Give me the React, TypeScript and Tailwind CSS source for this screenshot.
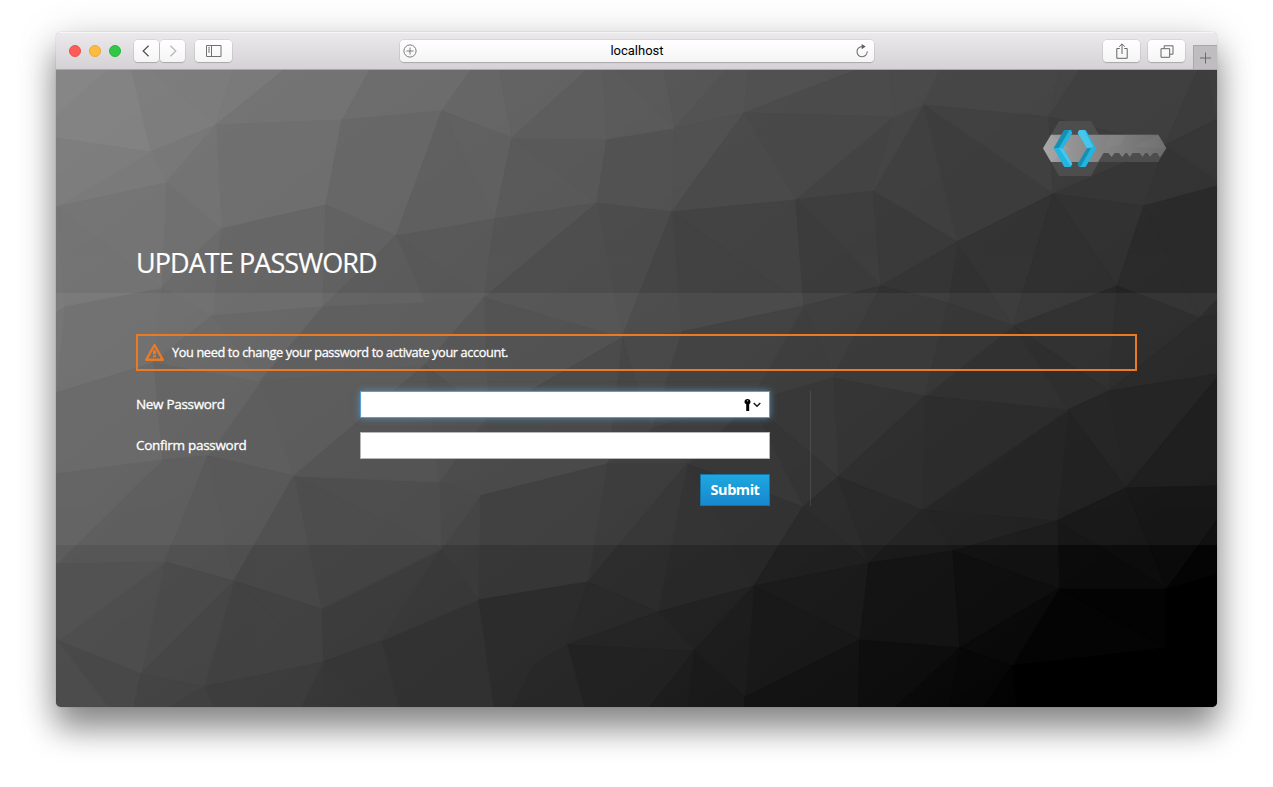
import React from "react";

type Point = [number, number];

/* Corners of the faceted backdrop. */
const points: Point[] = [
  [95, 82], [160, 55], [110, 113], [165, 159], [286, 50], [270, 135], [386, 41], [340, 166], [105, 218], [156, 246],
  [267, 237], [369, 233], [8, 236], [204, 312], [97, 293], [439, 149], [541, 133], [428, 228], [456, 68], [551, 69],
  [619, 58], [688, 43], [616, 142], [740, 130], [748, 236], [566, 268], [625, 262], [867, 35], [838, 47], [993, 47],
  [817, 121], [901, 172], [997, 124], [1088, 136], [825, 216], [957, 256], [1061, 216], [1144, 248], [892, 233], [1109, 75],
  [777, 308], [1053, 321], [1012, 340], [869, 326], [694, 332], [595, 359], [551, 394], [631, 394], [424, 426], [747, 437],
  [782, 407], [422, 530], [532, 512], [602, 542], [698, 516], [511, 575], [478, 595], [638, 581], [689, 627], [385, 479],
  [432, 345], [369, 295], [106, 390], [152, 386], [238, 406], [383, 412], [109, 492], [178, 511], [265, 539], [325, 571],
  [267, 592], [2, 571], [85, 604], [148, 617], [866, 440], [1001, 451], [1070, 418], [813, 493], [897, 481], [1003, 519],
  [1111, 519], [804, 570], [904, 578], [956, 596], [1111, 578],
  [0, 0], [50, 0], [76, 0], [95, 0], [178, 0], [228, 0], [314, 0], [415, 0], [443, 0], [531, 0],
  [547, 0], [560, 0], [608, 0], [670, 0], [693, 0], [801, 0], [834, 0], [841, 0], [884, 0], [955, 0],
  [1004, 0], [1024, 0], [1142, 0], [1150, 0], [1161, 0],
  [1161, 49], [1161, 110], [1161, 116], [1161, 230], [1161, 245], [1161, 304], [1161, 308], [1161, 416], [1161, 450],
  [1161, 505], [1161, 532], [1161, 612], [1161, 637],
  [1102, 637], [960, 637], [928, 637], [893, 637], [840, 637], [803, 637], [688, 637], [631, 637], [594, 637],
  [528, 637], [457, 637], [437, 637], [343, 637], [310, 637], [271, 637], [245, 637], [158, 637], [115, 637],
  [78, 637], [52, 637], [0, 637],
  [0, 567], [0, 494], [0, 404], [0, 323], [0, 242], [0, 172], [0, 137], [0, 68], [0, 45],
];

/* Edges between the corners, as chains of indices. */
const chains = `
86-152 87-0 88-1-89 90-1 91-4 1-4-6-92 151-0-1 0-2 0-150 150-2-1 2-3-1 2-8-3-5 3-9 4-5-7 5-10 6-7 14-8-9 148-12-8-150
12-150 9-14 9-13 9-10-7 13-10-11 10-61 7-11-17 11-13 17-61 14-13 147-14-62 12-147 13-63 13-64 13-61-64 61-65-60-61
17-60-25 46-25-45-26-24 25-26 44-47 45-44 45-47-46 45-46 48-46-52-47-53 54-47-49-54 49-50 49-44-50 59-48-65 51-48-60
59-51-52-55 52-53-55 57-53-54-57 54-58 57-55-56-133 55-132 51-134 131-57-130 57-58-129 58-81 54-77-49 77-50-74
50-43-74 43-42-74 75-42-76 41-42-35-41-36 37-41-115 41-76-116 117-76-75 76-80-75-74 78-75-79 77-74-78-77-81 79-78-82
79-80-84-79-83 79-82-81-128 118-80-119 81-54 127-82-126 82-83-125 124-83-84-120 121-84-123 43-40-34 24-40-44 40-50
43-35 24-34 68-59-69 59-64-65-59 67-64-63-62 64-68 66-63-67 146-62-145 62-66-71 72-66-67-68-70-67-72 67-73
51-69-70-73 69-135 137-70-138 70-136 139-73-140 73-72-141 72-71-142 71-144 93-18-94 19-95 96-20-97 20-98 99-21-100
6-18-19-20-21 6-15-18-16-15-7 15-17 19-16-22-20 22-21-23-22 17-16-25-22-26 22-24-23 25-17-7 21-28-101 102-27-103
28-27-30-28-23-30-34-23 30-31-27-32-29-27 104-29-105 106-29-39-107 39-110-108 32-39-33 39-111 31-32-33-36-32-35
36-37-33-112 38-31-34-38-35-31 38-43 35-36 113-37-114 66-145 24-44
`;

function buildFacets(): number[][] {
  const links: Set<number>[] = points.map(() => new Set<number>());
  const join = (a: number, b: number) => {
    links[a].add(b);
    links[b].add(a);
  };
  chains.trim().split(/\s+/).forEach((chain) => {
    const ids = chain.split("-").map(Number);
    for (let i = 1; i < ids.length; i++) join(ids[i - 1], ids[i]);
  });
  for (let i = 85; i < 152; i++) join(i, i + 1);
  join(152, 85);

  const angle = (a: number, b: number) => Math.atan2(points[b][1] - points[a][1], points[b][0] - points[a][0]);
  const around = links.map((set, a) => [...set].sort((p, q) => angle(a, p) - angle(a, q)));
  const seen = new Set<string>();
  const faces: number[][] = [];
  around.forEach((list, a) =>
    list.forEach((b) => {
      if (seen.has(a + ":" + b)) return;
      const face: number[] = [];
      let from = a;
      let to = b;
      while (!seen.has(from + ":" + to)) {
        seen.add(from + ":" + to);
        face.push(from);
        const next = around[to];
        const turn = next[(next.indexOf(from) + next.length - 1) % next.length];
        from = to;
        to = turn;
      }
      faces.push(face);
    })
  );
  return faces.filter((f) => {
    const area = f.reduce((sum, p, i) => {
      const q = f[(i + 1) % f.length];
      return sum + points[p][0] * points[q][1] - points[q][0] * points[p][1];
    }, 0);
    return area > 0;
  });
}

const facets = buildFacets();

function shade(face: number[]) {
  const x = face.reduce((s, i) => s + points[i][0], 0) / face.length;
  const y = face.reduce((s, i) => s + points[i][1], 0) / face.length;
  const lift = Math.max(0, x - 760) * 0.045 * (1 - y / 637);
  const v = Math.max(0, Math.round(138 - 0.077 * x - 0.099 * y + lift));
  return `rgb(${v},${v},${v})`;
}

function Backdrop() {
  return (
    <svg className="absolute inset-0 h-full w-full" viewBox="0 0 1161 637" preserveAspectRatio="none" aria-hidden="true">
      <defs>
        <linearGradient id="slope" gradientUnits="userSpaceOnUse" x1="0" y1="0" x2="675.6" y2="868.6">
          <stop offset="0" stopColor="#8a8a8a" />
          <stop offset="1" stopColor="#000" />
        </linearGradient>
      </defs>
      <rect width="1161" height="637" fill="url(#slope)" />
      <g opacity="0.9">
        {facets.map((face, i) => (
          <polygon
            key={i}
            points={face.map((p) => points[p].join(",")).join(" ")}
            fill={shade(face)}
            stroke={shade(face)}
            strokeWidth="1.2"
            strokeLinejoin="round"
          />
        ))}
      </g>
    </svg>
  );
}

function KeyLogo() {
  return (
    <svg width="125" height="57" viewBox="36 30 375 171" aria-hidden="true">
      <defs>
        <linearGradient id="blade" x1="0" x2="1">
          <stop offset="0" stopColor="#a2a2a2" />
          <stop offset="0.45" stopColor="#868686" />
          <stop offset="1" stopColor="#6c6c6c" />
        </linearGradient>
      </defs>
      <path d="M87 33H183L207 74H385L409 115L385 156H207L183 198H87L39 115Z" fill="#4d4d4d" />
      <path d="M63 74H385L409 115L391 140H388L382 129H370L360 140L352 129H346L338 140L329 129H308L299 141L291 129H286L277 141L267 129H254L245 141L235 129H221L204 156H63L39 115Z" fill="url(#blade)" />
      <path d="M39 115L63 74L120 115L63 156Z" fill="#fff" opacity=".06" />
      <path d="M240 74H290L270 105L225 115Z M310 110L385 74L409 115Z" fill="#fff" opacity=".03" />
      <path d="M103 60H123L127 69L99 115L127 162L122 171H103L71 115Z" fill="#22b5e0" />
      <path d="M103 60L118 61L87 113L71 115Z" fill="#168fb3" />
      <path d="M87 115H99L127 162L122 168Z" fill="#45c6ea" />
      <path d="M148 60H167L198 115L167 171H148L143 162L171 115L143 69Z" fill="#22b5e0" />
      <path d="M148 60H163L190 110L171 115L143 69Z" fill="#45c6ea" />
      <path d="M171 115H183L153 168L148 171L143 162Z" fill="#168fb3" />
    </svg>
  );
}

const toolButton =
  "flex h-[22px] items-center justify-center rounded-[4px] bg-gradient-to-b from-white to-[#f5f5f5] shadow-[0_0_0_0.5px_rgba(0,0,0,0.13),0_1px_1px_rgba(0,0,0,0.16)]";

function Toolbar() {
  return (
    <div className="flex h-[38px] shrink-0 items-center border-b border-[#a9a8a9] border-t border-t-[#f6f6f6] bg-gradient-to-b from-[#ebe9eb] to-[#d4d2d4] pl-[13px]">
      <div className="flex gap-2">
        <span className="h-3 w-3 rounded-full border border-[#ec514c] bg-[#fc5d59]" />
        <span className="h-3 w-3 rounded-full border border-[#e9a937] bg-[#fdbb40]" />
        <span className="h-3 w-3 rounded-full border border-[#28b63b] bg-[#33c748]" />
      </div>
      <div className="ml-[13px] flex gap-px">
        <span className={toolButton + " w-[25px] pr-[2px]"}>
          <svg width="8" height="12" viewBox="0 0 8 12" fill="none" stroke="#555" strokeWidth="1.3"><path d="M6.6 .7L1.2 6l5.4 5.3" /></svg>
        </span>
        <span className={toolButton + " w-[25px]"}>
          <svg width="8" height="12" viewBox="0 0 8 12" fill="none" stroke="#b9b9b9" strokeWidth="1.3"><path d="M1.4 .7L6.8 6l-5.4 5.3" /></svg>
        </span>
      </div>
      <span className={toolButton + " ml-[10px] w-[37px]"}>
        <svg width="16" height="12" viewBox="0 0 16 12" fill="none" stroke="#707070" strokeWidth="1"><path d="M.5 .5h14.5v11H.5zM5.5 .5v11M2 2.9h2M2 4.9h2M2 6.9h2" /></svg>
      </span>
      <div className={toolButton + " ml-[168px] w-[474px] pl-[3px] pr-[5px]"}>
        <svg width="14" height="14" viewBox="0 0 14 14" fill="none" stroke="#7d7d7d" strokeWidth="1"><circle cx="7" cy="7" r="6.1" /><path d="M7 3.5v7M3.5 7h7" /></svg>
        <span className="flex-1 pl-[2px] text-center font-['Roboto',sans-serif] text-[13px] leading-[16px] text-black">localhost</span>
        <svg width="14" height="14" viewBox="0 0 14 14" fill="none"><path d="M7.4 2.6A5.1 5.1 0 1 0 12.2 7.4" stroke="#707070" strokeWidth="1.1" /><path d="M6.7 0L10.7 2.6L6.7 5.2Z" fill="#606060" /></svg>
      </div>
      <span className={toolButton + " ml-[229px] w-[37px]"}>
        <svg width="12" height="16" viewBox="0 0 12 16" fill="none" stroke="#666" strokeWidth="1"><path d="M3.8 5.5H.8v9.8h10.4V5.5H8.2M6 11V1M3.2 3.7L6 .9l2.8 2.8" /></svg>
      </span>
      <span className={toolButton + " ml-[8px] w-[37px]"}>
        <svg width="14" height="13" viewBox="0 0 14 13" fill="none" stroke="#666" strokeWidth="1"><path d="M1 3.7h8.7v8.6H1zM4.2 3.5V.8h8.8v8.4H9.9" /></svg>
      </span>
      <span className="ml-auto flex h-[24px] w-[24px] items-center justify-center self-end border-l border-t border-[#a9a8a9] bg-[#bfbdbf]">
        <svg width="12" height="12" viewBox="0 0 12 12" stroke="#6b6b6b" strokeWidth="1"><path d="M5.5 .5v11M0 6h11" /></svg>
      </span>
    </div>
  );
}

function WarningIcon() {
  return (
    <svg width="21" height="19" viewBox="0 0 21 19" fill="none" aria-hidden="true">
      <path d="M10.5 2L18.8 16.8H2.2Z" stroke="#ec7a23" strokeWidth="2.4" strokeLinejoin="round" />
      <path d="M9 7.2h3v4H9zM9 12.2h3v2H9z" fill="#ec7a23" />
    </svg>
  );
}

export default function App() {
  return (
    <div className="h-[787px] w-full overflow-hidden bg-white px-[56px] pt-[32px] font-['Open_Sans',sans-serif] text-white">
      <div className="flex h-[675px] w-[1161px] flex-col overflow-hidden rounded-[5px] shadow-[0_0_1px_rgba(0,0,0,0.4),0_22px_32px_rgba(0,0,0,0.4),0_6px_42px_rgba(0,0,0,0.18)]">
        <Toolbar />
        <div className="relative flex-1">
          <Backdrop />
          <div className="relative flex h-full flex-col">
            <div className="flex justify-end pr-[50px] pt-[50px]">
              <KeyLogo />
            </div>
            <h1 className="mt-[68px] pl-20 text-[27px] leading-[36px] tracking-[-0.93px] [-webkit-text-stroke:0.2px_white]">UPDATE PASSWORD</h1>
            <main className="mt-[12px] h-[252px] bg-white/5 px-20 pt-[41px]">
              <div className="flex h-[37px] w-[1001px] items-center gap-[7px] border-2 border-[#ec7a23] pl-[6px]">
                <WarningIcon />
                <p className="text-[12.75px] tracking-[-0.38px] [-webkit-text-stroke:0.3px_white]">You need to change your password to activate your account.</p>
              </div>
              <div className="mt-[20px] flex">
                <form className="w-[634px]" onSubmit={(e) => e.preventDefault()}>
                  <div className="flex h-[27px] items-center">
                    <label className="w-[224px] text-[13.5px] tracking-[-0.32px] [-webkit-text-stroke:0.3px_white]">New Password</label>
                    <div className="flex h-[27px] flex-1 items-center justify-end gap-[2px] border border-[#5a9fd4] bg-white pr-[8px] shadow-[0_0_7px_rgba(90,160,205,0.75)]">
                      <svg width="7" height="12" viewBox="0 0 7 12" aria-hidden="true"><path d="M3.5 0C5.4 0 6.5 1.2 6.5 2.8c0 1.2-.5 1.9-1.3 2.3V12H2.2V5.1C1 4.7.5 4 .5 2.8.5 1.2 1.6 0 3.5 0Z" fill="#000" /><circle cx="3.5" cy="1.8" r=".8" fill="#999" /></svg>
                      <svg width="8" height="6" viewBox="0 0 8 6" fill="none" stroke="#111" strokeWidth="1.3" aria-hidden="true"><path d="M.7 1l3.3 3.3L7.3 1" /></svg>
                    </div>
                  </div>
                  <div className="mt-[14px] flex h-[27px] items-center">
                    <label className="w-[224px] text-[13.5px] tracking-[-0.3px] [-webkit-text-stroke:0.3px_white]">Confirm password</label>
                    <div className="h-[27px] flex-1 border border-[#b6b6b6] bg-white" />
                  </div>
                  <div className="mt-[15px] flex justify-end">
                    <button className="h-[32px] w-[70px] border border-[#1475a8] bg-gradient-to-b from-[#1ea8e0] to-[#1788cf] text-[14.5px] font-bold leading-none tracking-[-0.45px]">Submit</button>
                  </div>
                </form>
                <div className="ml-10 h-[115px] w-px bg-white/10" />
              </div>
            </main>
          </div>
        </div>
      </div>
    </div>
  );
}
